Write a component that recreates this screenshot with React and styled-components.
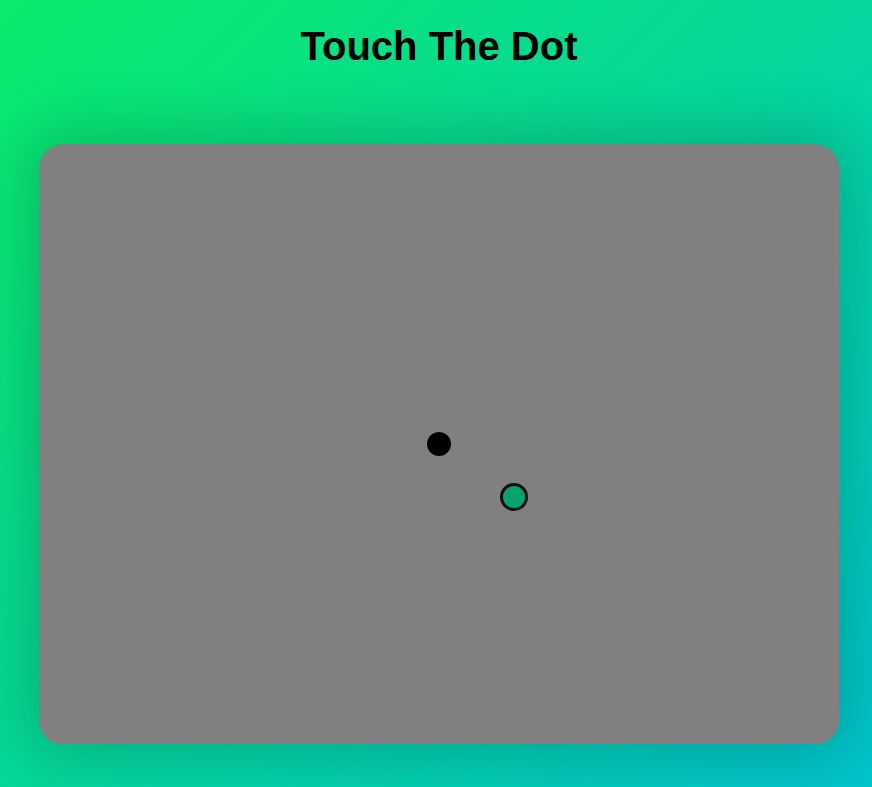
import React from "react";
import styled, { createGlobalStyle } from "styled-components";

const GlobalStyle = createGlobalStyle`
  html, body {
    margin: 0;
    padding: 0;
    height: 100%;
  }
  body {
    font-family: "Liberation Sans", Arial, sans-serif;
    overflow: hidden;
  }
`;

const Page = styled.div`
  min-height: 787px;
  box-sizing: border-box;
  padding: 23px 0 0 6px;
  display: flex;
  flex-direction: column;
  align-items: center;
  background: linear-gradient(135deg, #0aea6a 0%, #00c3cc 100%);
`;

const Title = styled.h1`
  margin: 0;
  font-family: "Liberation Sans", Arial, sans-serif;
  font-size: 40px;
  font-weight: 700;
  line-height: 46px;
  color: #000;
`;

const Board = styled.div`
  position: relative;
  margin-top: 75px;
  width: 800px;
  height: 600px;
  background: #808080;
  border-radius: 24px;
  box-shadow: 0 0 60px 12px rgba(0, 0, 0, 0.18);
`;

const Dot = styled.div`
  position: absolute;
  box-sizing: border-box;
  border-radius: 50%;
  width: ${(p) => p.$size}px;
  height: ${(p) => p.$size}px;
  background: ${(p) => p.$fill};
  border: ${(p) => (p.$ring ? "3px solid #111" : "none")};
  transform: translate(-50%, -50%);
`;

const dots = [
  { id: "target", x: 400, y: 300, size: 24, fill: "#000", ring: false },
  { id: "player", x: 475, y: 353, size: 28, fill: "#05a370", ring: true },
];

export default function App() {
  return (
    <>
      <GlobalStyle />
      <Page>
        <Title>Touch The Dot</Title>
        <Board>
          {dots.map((d) => (
            <Dot
              key={d.id}
              $size={d.size}
              $fill={d.fill}
              $ring={d.ring}
              style={{ left: d.x, top: d.y }}
            />
          ))}
        </Board>
      </Page>
    </>
  );
}
